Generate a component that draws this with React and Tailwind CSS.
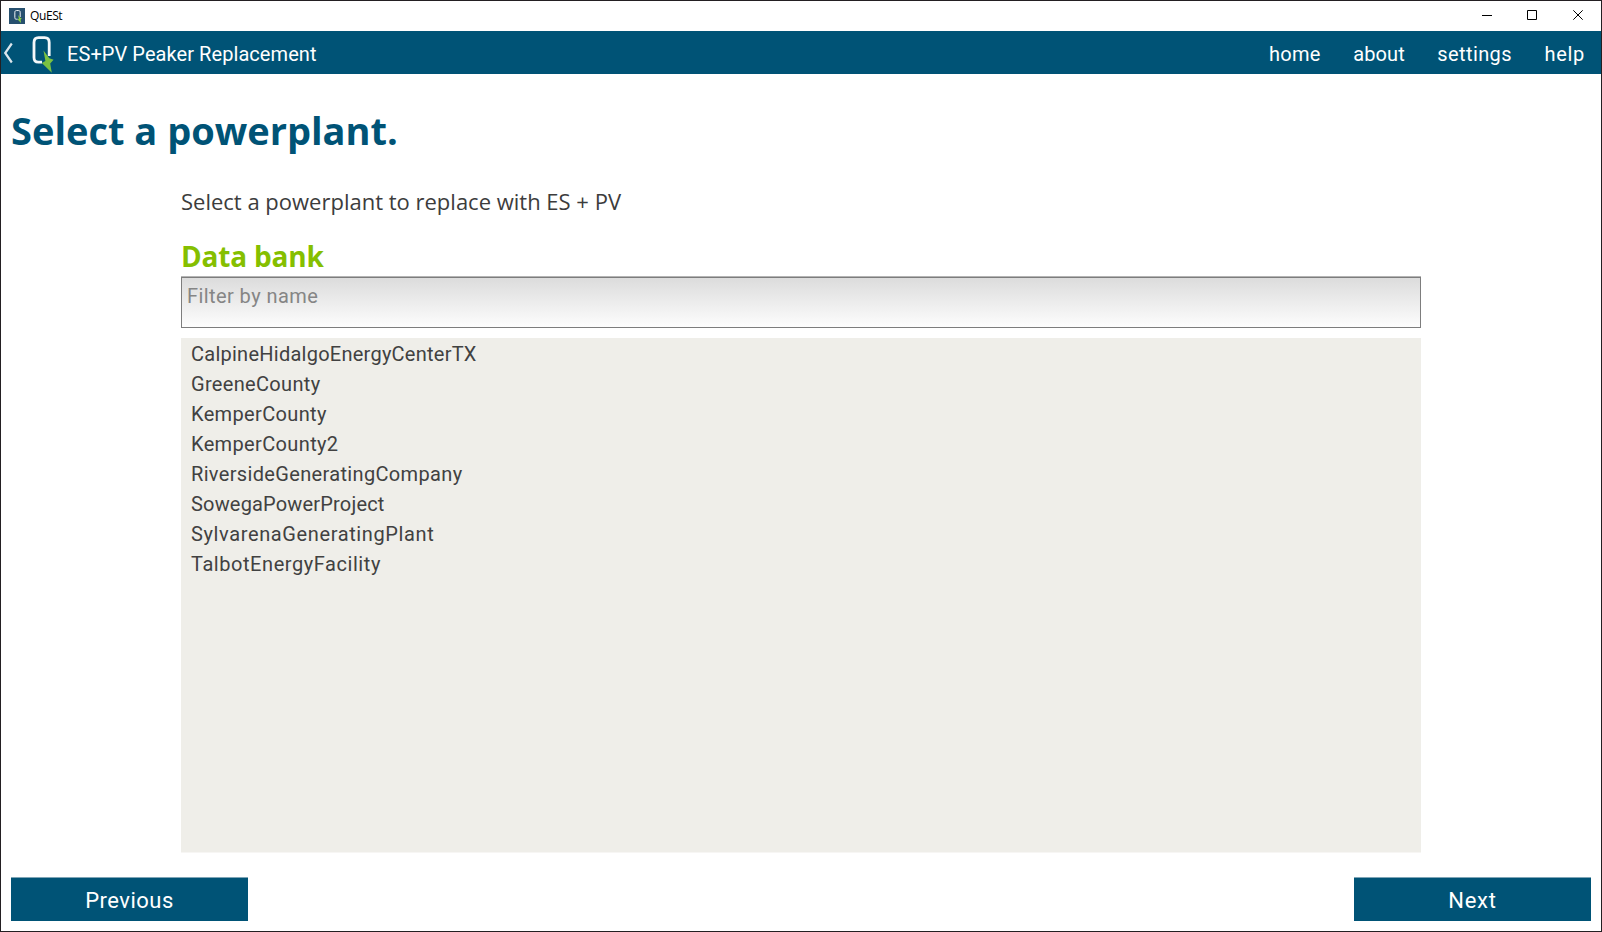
import React from "react";

const PLANTS = [
  ["CalpineHidalgoEnergyCenterTX", "tracking-[0.25px]"],
  ["GreeneCounty", "tracking-[0.32px]"],
  ["KemperCounty", "tracking-[0.35px]"],
  ["KemperCounty2", "tracking-[0.36px]"],
  ["RiversideGeneratingCompany", "tracking-[0.34px]"],
  ["SowegaPowerProject", "tracking-[0.18px]"],
  ["SylvarenaGeneratingPlant", "tracking-[0.62px]"],
  ["TalbotEnergyFacility", "tracking-[0.56px]"],
];

function Logo({ className, bolt = "#7ac142" }) {
  return (
    <svg className={className} viewBox="0 0 22 37" fill="none">
      <path
        d="M10 26.2H6.5C3.2 26.2 2 24.4 2 21.6V6.4C2 3.2 3.6 1.6 6.6 1.6H12.6C15.6 1.6 17.2 3.2 17.2 6.4V20"
        stroke="#f4f8fa"
        strokeWidth="2.8"
      />
      <path d="M11.5 14.5L17.3 22.2L21.6 23.8L18.2 27.4L19.8 36.8L9.8 27L13.4 25Z" fill={bolt} />
    </svg>
  );
}

function TitleBar() {
  return (
    <div className="flex h-[30px] shrink-0 items-center bg-white pl-2">
      <div className="flex h-4 w-4 items-center justify-center bg-[#27506f]">
        <Logo className="ml-px h-[13px] w-2" bolt="#8bd143" />
      </div>
      <span className="ml-[5px] font-['Open_Sans',sans-serif] text-[12px] leading-[14px] tracking-[-0.4px] text-black">
        QuESt
      </span>
      <svg className="ml-auto h-[30px] w-[138px]" viewBox="0 0 138 30" fill="none" stroke="#000" strokeWidth="1">
        <path d="M19 14.5H29" />
        <path d="M64.5 9.5H73.5V18.5H64.5Z" />
        <path d="M110.3 9.3L119.7 18.7M119.7 9.3L110.3 18.7" />
      </svg>
    </div>
  );
}

function NavBar() {
  return (
    <header className="flex h-[43px] shrink-0 items-center bg-[#005376] pl-[2px] pr-[16px] text-[20px] text-white">
      <svg className="h-[22px] w-[11px]" viewBox="0 0 11 22" fill="none" stroke="#dbe6ec" strokeWidth="2.2">
        <path d="M8.8 1.5L2.2 11L8.8 20.5" />
      </svg>
      <Logo className="ml-[18px] mt-[4px] h-[37px] w-[22px]" />
      <span className="ml-[13px] pt-[2px] leading-6 tracking-[0.07px]">ES+PV Peaker Replacement</span>
      <nav className="ml-auto flex gap-[32.5px] pt-[2px] leading-6">
        <span className="tracking-[0.3px]">home</span>
        <span className="tracking-[0.1px]">about</span>
        <span className="tracking-[0.4px]">settings</span>
        <span className="tracking-[0.7px]">help</span>
      </nav>
    </header>
  );
}

const BUTTON =
  "flex h-[44px] w-[237px] items-center justify-center border-t border-[#7fa5b6] bg-[#005376] pt-[2px] text-[22px] leading-7 text-white";

export default function App() {
  return (
    <div className="flex h-[932px] w-[1602px] flex-col border border-[#231f22] bg-white font-['Roboto',sans-serif]">
      <TitleBar />
      <NavBar />
      <main className="flex flex-1 flex-col px-[10px] pb-[10px]">
        <h1 className="mt-[30px] h-[52px] whitespace-nowrap font-['Open_Sans',sans-serif] text-[38px] font-bold leading-[52px] text-[#005376]">
          Select a powerplant.
        </h1>
        <section className="mx-[170px] flex flex-col">
          <p className="mt-[30px] h-[30px] font-['Open_Sans',sans-serif] text-[22px] leading-[30px] text-[#3c3c3c]">
            Select a powerplant to replace with ES + PV
          </p>
          <h2 className="mt-[21px] h-[38px] font-['Open_Sans',sans-serif] text-[28px] font-bold leading-[38px] tracking-[-0.2px] text-[#85bf00]">
            Data bank
          </h2>
          <div className="mt-px flex h-[52px] flex-col border-t border-[#b4b4b4]">
            <div className="flex-1 border border-[#7d7d7d] bg-linear-to-b from-[#dcdcdc] to-[#fdfdfd] pl-[5px] pt-[6px] text-[20px] leading-6 tracking-[0.42px] text-[#858585]">
              Filter by name
            </div>
          </div>
          <ul className="mt-[10px] flex h-[515px] flex-col border-b border-[#f7f6f4] bg-[#efeee9] pl-[10px] text-[20px] text-[#414141]">
            {PLANTS.map(([name, tracking]) => (
              <li key={name} className={`flex h-[30px] items-center pt-[2px] leading-6 ${tracking}`}>
                {name}
              </li>
            ))}
          </ul>
        </section>
        <div className="mt-auto flex justify-between">
          <button className={`${BUTTON} tracking-[0.5px]`}>Previous</button>
          <button className={`${BUTTON} tracking-[0.8px]`}>Next</button>
        </div>
      </main>
    </div>
  );
}
